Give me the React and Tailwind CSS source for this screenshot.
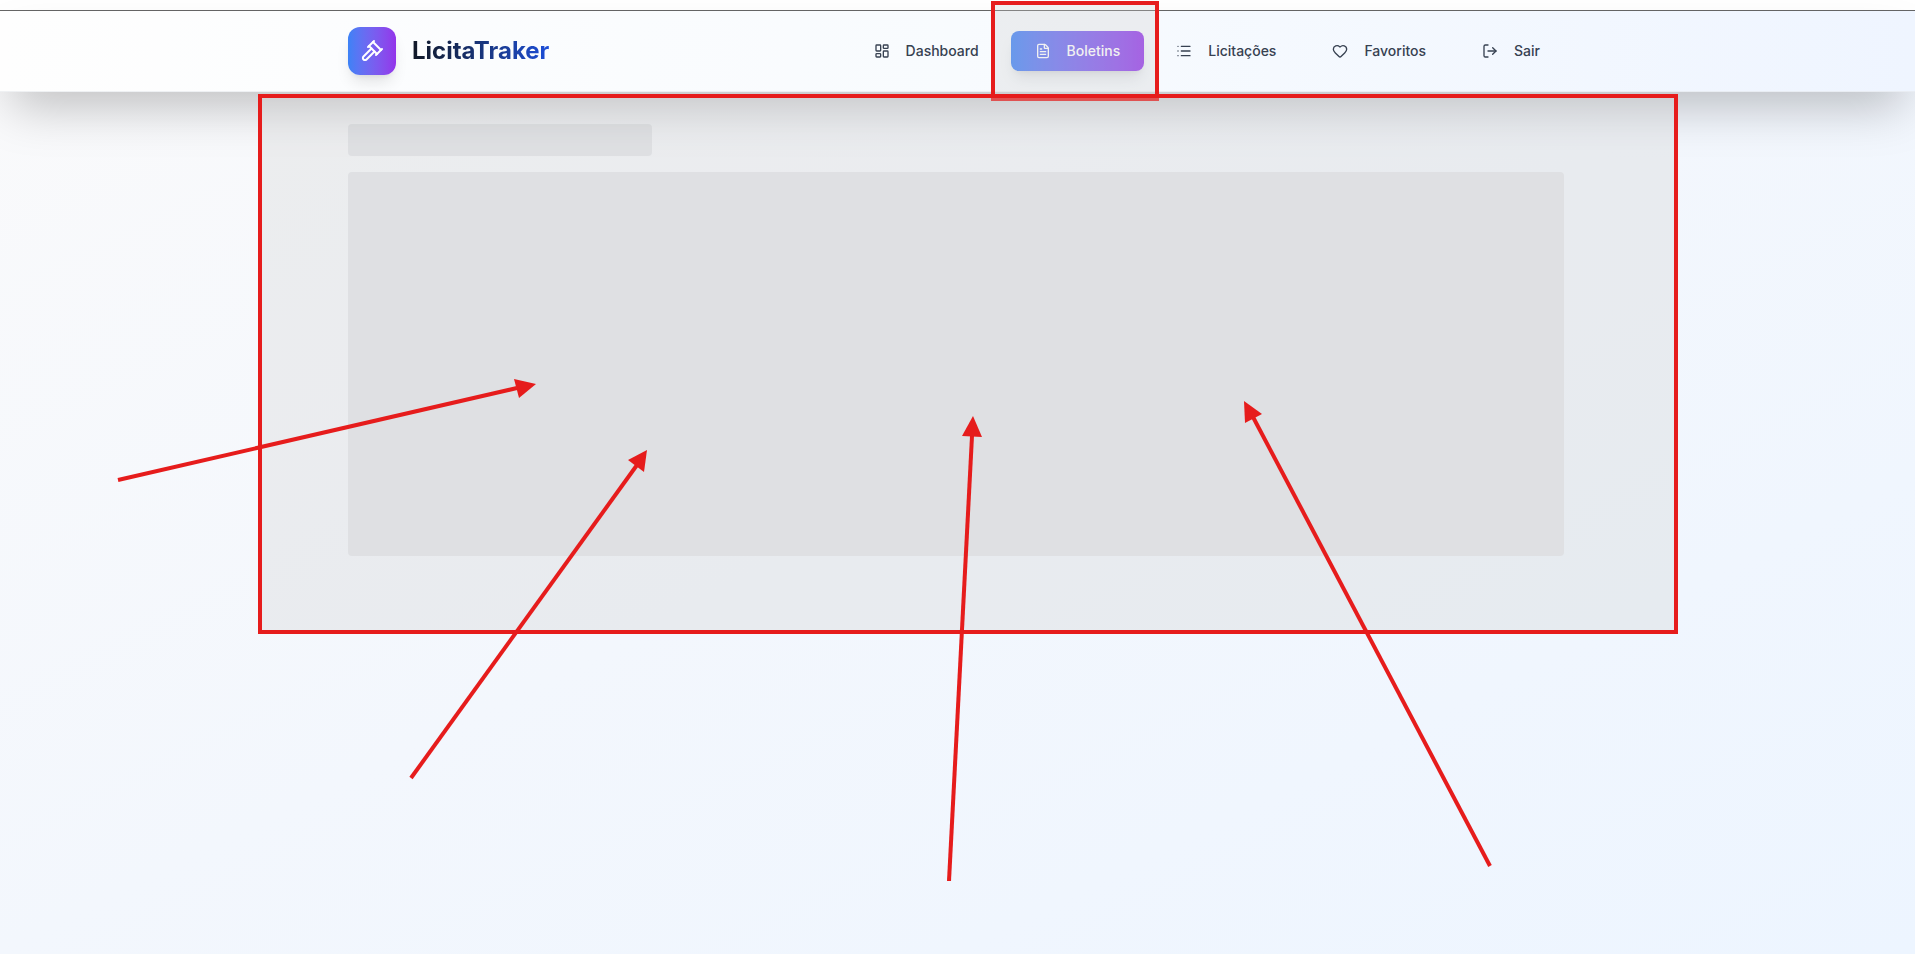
import { FileText, Heart, LayoutDashboard, List, LogOut } from "lucide-react";

const navItems = [
  { label: "Dashboard", Icon: LayoutDashboard },
  { label: "Boletins", Icon: FileText, active: true },
  { label: "Licitações", Icon: List },
  { label: "Favoritos", Icon: Heart },
  { label: "Sair", Icon: LogOut },
];

const arrows = [
  { from: [118, 480], base: [517, 388], head: "536,384 514,379 519,398" },
  { from: [411, 778], base: [637, 465], head: "647,450 628,460 644,472" },
  { from: [949, 881], base: [972, 436], head: "973,416 962,436 982,437" },
  { from: [1490, 866], base: [1253, 417], head: "1244,401 1245,423 1262,414" },
];

function GavelIcon() {
  return (
    <svg
      className="size-6"
      viewBox="0 0 24 24"
      fill="none"
      stroke="currentColor"
      strokeWidth="2"
      strokeLinecap="round"
      strokeLinejoin="round"
      aria-hidden="true"
    >
      <path d="m14.5 12.5-8 8a2.119 2.119 0 1 1-3-3l8-8" />
      <path d="m16 16 6-6" />
      <path d="m8 8 6-6" />
      <path d="m9 7 8 8" />
      <path d="m21 11-8-8" />
    </svg>
  );
}

function Header() {
  return (
    <header className="relative border-b border-gray-200/60 bg-linear-to-r from-[#fefefe] via-[#f8fbfe] to-[#eff5ff] pr-[3px] shadow-2xl">
      <div className="mx-auto flex h-20 max-w-7xl items-center justify-between px-8">
        <a href="#" className="flex items-center gap-4">
          <span className="flex size-12 items-center justify-center rounded-xl bg-linear-to-r from-[#3b82f6] to-[#9333ea] text-white shadow-lg">
            <GavelIcon />
          </span>
          <span className="bg-linear-to-r from-[#111827] to-[#1d4ed8] bg-clip-text text-2xl font-bold text-transparent">
            LicitaTraker
          </span>
        </a>
        <nav className="flex items-center gap-2">
          {navItems.map(({ label, Icon, active }) => (
            <a
              key={label}
              href="#"
              aria-current={active ? "page" : undefined}
              className={
                active
                  ? "flex h-10 items-center gap-4 rounded-lg bg-linear-to-r from-[#3b82f6] to-[#9333ea] px-6 text-sm font-medium text-white shadow-lg"
                  : "flex h-10 items-center gap-4 rounded-lg px-6 text-sm font-medium text-[#374151]"
              }
            >
              <Icon className="size-4" aria-hidden="true" />
              {label}
            </a>
          ))}
        </nav>
      </div>
    </header>
  );
}

function Annotations() {
  return (
    <div className="pointer-events-none absolute inset-0 overflow-hidden">
      <div className="absolute top-px left-[991px] h-[100px] w-[168px] border-4 border-[#e61c1c] bg-[#d0d0d0]/30 bg-clip-padding" />
      <div className="absolute top-[94px] left-[258px] h-[540px] w-[1420px] border-4 border-[#e61c1c] bg-[#d0d0d0]/30 bg-clip-padding" />
      <svg className="absolute top-0 left-0 h-[954px] w-[1915px]" viewBox="0 0 1915 954" aria-hidden="true">
        {arrows.map(({ from, base, head }) => (
          <g key={head}>
            <line x1={from[0]} y1={from[1]} x2={base[0]} y2={base[1]} stroke="#e61c1c" strokeWidth="4" />
            <polygon points={head} fill="#e61c1c" />
          </g>
        ))}
      </svg>
    </div>
  );
}

export default function App() {
  return (
    <div className="relative min-h-screen bg-linear-to-br from-[#fafafb] via-[#f3f7fd] to-[#edf5ff] font-['Inter',sans-serif]">
      <div className="h-[11px] border-b border-[#666666] bg-white" />
      <Header />
      <div className="pr-[3px]">
        <main className="mx-auto flex max-w-7xl flex-col gap-4 px-8 py-8">
          <div className="h-8 w-1/4 rounded bg-[#e5e7eb]" />
          <div className="h-96 rounded bg-[#e5e7eb]" />
        </main>
      </div>
      <Annotations />
    </div>
  );
}
